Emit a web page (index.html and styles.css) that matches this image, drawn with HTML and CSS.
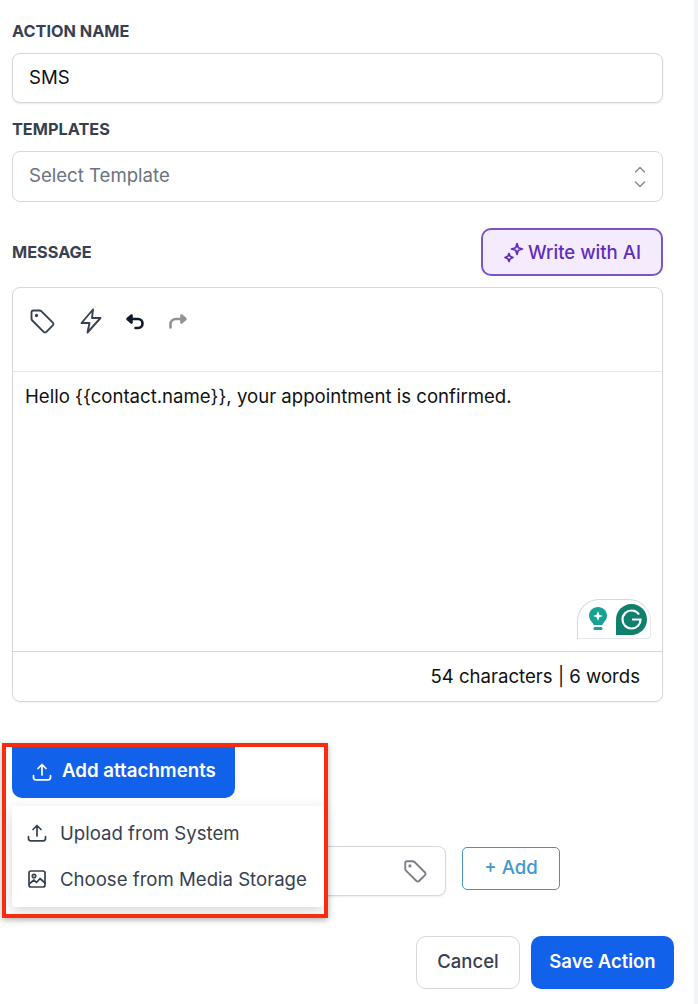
FILE: index.html
```html
<!DOCTYPE html>
<html>
<head>
    <meta charset="utf-8">
    <link rel="stylesheet" href="styles.css">
</head>

<body>

<div class="panel">
    <label class="field_label">ACTION NAME</label>
    <div class="input name_input">SMS</div>

    <label class="field_label templates_label">TEMPLATES</label>
    <div class="input select_input">
        <span>Select Template</span>
        <svg class="updown" width="14" height="26" viewBox="0 0 14 26" fill="none" stroke="#8b909a" stroke-width="1.6" stroke-linecap="round" stroke-linejoin="round">
            <path d="M2.500 8 7 3.500 11.500 8"/>
            <path d="M2.500 18 7 22.500 11.500 18"/>
        </svg>
    </div>

    <div class="message_head">
        <label class="field_label">MESSAGE</label>
        <div class="ai_button">
            <svg width="22" height="22" viewBox="0 0 22 22" fill="none" stroke="#5f2eb8" stroke-width="1.700" stroke-linejoin="round">
                <path d="M14 2.500 15.300 6.700 19.500 8 15.300 9.300 14 13.500 12.700 9.300 8.500 8 12.700 6.700Z"/>
                <path d="M6 12.500 7.200 15.300 10 16.500 7.200 17.700 6 20.500 4.800 17.700 2 16.500 4.800 15.300Z"/>
            </svg>
            Write with AI
        </div>
    </div>

    <div class="editor">
        <div class="toolbar">
            <svg width="28" height="28" viewBox="0 0 28 28" fill="none" stroke="#374151" stroke-width="1.900" stroke-linejoin="round">
                <path d="M3.500 5.500C3.500 4.400 4.400 3.500 5.500 3.500H11.500C12.300 3.500 13 3.800 13.500 4.300L24.800 15.600C25.600 16.400 25.600 17.600 24.800 18.400L18.400 24.800C17.600 25.600 16.400 25.600 15.600 24.800L4.300 13.500C3.800 13 3.500 12.300 3.500 11.500Z"/>
                <circle cx="8.500" cy="8.500" r="0.700" fill="#374151"/>
            </svg>
            <svg class="bolt" width="26" height="28" viewBox="0 0 26 28" fill="none" stroke="#374151" stroke-width="1.900" stroke-linejoin="round">
                <path d="M15 2.500 3.500 16H11.500L9.500 25.500 22.500 11H14Z"/>
            </svg>
            <svg class="undo" width="20" height="18" viewBox="0 0 20 18" fill="none" stroke="#111827" stroke-width="2.600" stroke-linecap="round" stroke-linejoin="round">
                <path d="M6.500 2.500 2.500 6 6.500 9.500Z" fill="#111827"/>
                <path d="M3.500 6H13C15.800 6 17.500 8 17.500 10.500S15.800 15 13 15H10.500"/>
            </svg>
            <svg class="redo" width="20" height="18" viewBox="0 0 20 18" fill="none" stroke="#8f9297" stroke-width="2.600" stroke-linecap="round" stroke-linejoin="round">
                <path d="M13.500 2.500 17.500 6 13.500 9.500Z" fill="#8f9297"/>
                <path d="M16.500 6H8C5 6 2.500 8 2.500 11V14.500"/>
            </svg>
        </div>
        <div class="editor_body">
            <p class="message_text">Hello {{contact.name}}, your appointment is confirmed.</p>
            <div class="grammarly">
                <svg width="20" height="26" viewBox="0 0 20 26">
                    <path d="M10 1C4.900 1 1 4.900 1 9.600 1 12.900 2.800 15 4.500 17 5.200 17.800 5.500 18.500 5.500 19H14.500C14.500 18.500 14.800 17.800 15.500 17 17.200 15 19 12.900 19 9.600 19 4.900 15.100 1 10 1Z" fill="#16a394"/>
                    <path d="M10 5 11.300 8.700 15 10 11.300 11.300 10 15 8.700 11.300 5 10 8.700 8.700Z" fill="#fff"/>
                    <rect x="5.500" y="21" width="9" height="3" rx="1.500" fill="#16a394"/>
                </svg>
                <svg width="31" height="31" viewBox="0 0 31 31" fill="none">
                    <path d="M15.500 0C24 0 31 7 31 15.500S24 31 15.500 31H0V15.500C0 7 7 0 15.500 0Z" fill="#0f7f6e"/>
                    <path d="M23 10.500C21.300 8 18.600 6.500 15.500 6.500 10.500 6.500 6.500 10.500 6.500 15.500S10.500 24.500 15.500 24.500C20.500 24.500 24.500 20.700 24.500 15.500H16" stroke="#fff" stroke-width="2.200"/>
                </svg>
            </div>
        </div>
        <div class="editor_foot">54 characters | 6 words</div>
    </div>

    <div class="attach_wrap">
        <div class="attach_button">
            <svg width="22" height="22" viewBox="0 0 22 22" fill="none" stroke="#fff" stroke-width="1.700" stroke-linecap="round" stroke-linejoin="round">
                <path d="M11 14V3.500M7 7.500 11 3.500 15 7.500"/>
                <path d="M2.500 14.500V16.500C2.500 17.800 3.500 18.800 4.800 18.800H17.200C18.500 18.800 19.500 17.800 19.500 16.500V14.500"/>
            </svg>
            <span>Add attachments</span>
        </div>
        <div class="attach_menu">
            <div class="menu_item">
                <svg width="22" height="22" viewBox="0 0 22 22" fill="none" stroke="#374151" stroke-width="1.700" stroke-linecap="round" stroke-linejoin="round">
                    <path d="M11 14V3.500M7 7.500 11 3.500 15 7.500"/>
                    <path d="M2.500 14.500V16.500C2.500 17.800 3.500 18.800 4.800 18.800H17.200C18.500 18.800 19.500 17.800 19.500 16.500V14.500"/>
                </svg>
                Upload from System
            </div>
            <div class="menu_item">
                <svg width="22" height="22" viewBox="0 0 22 22" fill="none" stroke="#374151" stroke-width="1.700" stroke-linecap="round" stroke-linejoin="round">
                    <rect x="3" y="3" width="16" height="16" rx="2"/>
                    <circle cx="8" cy="8" r="1.700"/>
                    <path d="M3 16 8 12 10.500 14.500 14 10.500 19 15"/>
                </svg>
                Choose from Media Storage
            </div>
        </div>
        <div class="red_box"></div>
    </div>

    <div class="tag_row">
        <div class="input tag_input">
            <svg width="26" height="26" viewBox="0 0 28 28" fill="none" stroke="#7b7f87" stroke-width="2" stroke-linejoin="round">
                <path d="M3.500 5.500C3.500 4.400 4.400 3.500 5.500 3.500H11.500C12.300 3.500 13 3.800 13.500 4.300L24.800 15.600C25.600 16.400 25.600 17.600 24.800 18.400L18.400 24.800C17.600 25.600 16.400 25.600 15.600 24.800L4.300 13.500C3.800 13 3.500 12.300 3.500 11.500Z"/>
                <circle cx="8.500" cy="8.500" r="0.700" fill="#7b7f87"/>
            </svg>
        </div>
        <div class="add_button">+ Add</div>
    </div>

    <div class="actions">
        <div class="cancel_button">Cancel</div>
        <div class="save_button">Save Action</div>
    </div>
</div>

</body>
</html>
```

FILE: styles.css
```css
html, body {
    margin: 0;
    padding: 0;
}
body {
    width: 698px;
    height: 1004px;
    overflow: hidden;
    background: #fff;
    font-family: Inter, "Noto Sans", sans-serif;
    color: #111;
}
.panel {
    width: 694px;
    height: 1004px;
    box-sizing: border-box;
    padding: 21px 0 0 12px;
    position: relative;
    box-shadow: 4px 0 0 #f3f4f6;
}
.field_label {
    display: block;
    font-size: 16.300px;
    line-height: 20px;
    font-weight: 700;
    color: #374151;
}
.templates_label {
    margin-top: 16px;
}
.input {
    box-sizing: border-box;
    width: 651px;
    border: 1px solid #d5d7db;
    border-radius: 8px;
    background: #fff;
    box-shadow: 0 1px 2px rgba(0, 0, 0, 0.08);
    display: flex;
    align-items: center;
    padding: 0 16px;
    font-size: 18.600px;
}
.name_input {
    height: 50px;
    margin-top: 12px;
    color: #111;
    padding-bottom: 3px;
}
.select_input {
    height: 51px;
    margin-top: 12px;
    color: #6b7280;
    justify-content: space-between;
    padding-bottom: 3px;
    box-shadow: none;
}
.updown {
    margin: 3px -1px 0 0;
}
.message_head {
    width: 651px;
    height: 48px;
    margin-top: 26px;
    display: flex;
    align-items: center;
    justify-content: space-between;
}
.ai_button {
    box-sizing: border-box;
    width: 182px;
    height: 48px;
    border: 2px solid #7a54c8;
    border-radius: 10px;
    background: #f4ebfd;
    color: #5f2eb8;
    font-size: 18.600px;
    font-weight: 500;
    display: flex;
    align-items: center;
    justify-content: center;
    gap: 3px;
}
.editor {
    box-sizing: border-box;
    width: 651px;
    height: 415px;
    margin-top: 11px;
    border: 1px solid #d5d7db;
    border-radius: 8px;
    display: flex;
    flex-direction: column;
    box-shadow: 0 1px 2px rgba(0, 0, 0, 0.05);
}
.toolbar {
    height: 84px;
    box-sizing: border-box;
    border-bottom: 1px solid #e5e7eb;
    padding: 19px 0 0 15px;
    display: flex;
    align-items: flex-start;
}
.bolt {
    margin-left: 22px;
}
.undo {
    margin: 6px 0 0 21px;
}
.redo {
    margin: 6px 0 0 23px;
}
.editor_body {
    flex: 1;
    position: relative;
}
.message_text {
    margin: 13px 0 0 12px;
    font-size: 18.600px;
    line-height: 22px;
    color: #111;
}
.grammarly {
    position: absolute;
    right: 11px;
    bottom: 12px;
    box-sizing: border-box;
    width: 74px;
    height: 40px;
    background: #fff;
    border: 1px solid #d5d7db;
    border-bottom-color: #e5e7eb;
    border-right-color: #e5e7eb;
    border-radius: 22px 22px 4px 0;
    display: flex;
    align-items: center;
    gap: 8px;
    padding-left: 10px;
}
.editor_foot {
    height: 50px;
    box-sizing: border-box;
    border-top: 1px solid #d5d7db;
    padding: 12px 22px 0 0;
    text-align: right;
    font-size: 18.600px;
    line-height: 24px;
    color: #111;
}
.attach_wrap {
    position: relative;
    margin-top: 43px;
    height: 53px;
}
.attach_button {
    box-sizing: border-box;
    width: 223px;
    height: 53px;
    background: #1261ea;
    border-radius: 0 0 10px 10px;
    color: #fff;
    font-size: 18.700px;
    font-weight: 600;
    display: flex;
    align-items: center;
    gap: 9px;
    padding-left: 19px;
}
.attach_button span {
    margin-bottom: 2px;
}
.attach_menu {
    position: absolute;
    left: 0;
    top: 61px;
    box-sizing: border-box;
    width: 312px;
    height: 101px;
    background: #fff;
    border-radius: 4px;
    box-shadow: 0 4px 14px rgba(0, 0, 0, 0.16);
    z-index: 2;
    padding-top: 4px;
}
.menu_item {
    height: 46px;
    display: flex;
    align-items: center;
    gap: 12px;
    padding-left: 14px;
    font-size: 18.600px;
    color: #374151;
}
.red_box {
    position: absolute;
    left: -10px;
    top: -2px;
    box-sizing: border-box;
    width: 326px;
    height: 175px;
    border: 4px solid #fa2c0f;
    box-shadow: 0 2px 6px rgba(0, 0, 0, 0.3);
    z-index: 3;
}
.tag_row {
    display: flex;
    align-items: flex-start;
    gap: 16px;
    margin-top: 48px;
}
.tag_input {
    width: 434px;
    height: 50px;
    justify-content: flex-end;
    padding-right: 17px;
}
.add_button {
    box-sizing: border-box;
    width: 98px;
    height: 43px;
    margin-top: 1px;
    padding-bottom: 3px;
    border: 1px solid #4d93b8;
    border-radius: 5px;
    color: #3f9ad0;
    font-size: 18.600px;
    font-weight: 500;
    display: flex;
    align-items: center;
    justify-content: center;
}
.actions {
    display: flex;
    justify-content: flex-end;
    gap: 11px;
    width: 662px;
    margin-top: 40px;
}
.cancel_button, .save_button {
    box-sizing: border-box;
    height: 53px;
    padding-bottom: 4px;
    border-radius: 10px;
    font-size: 18.500px;
    display: flex;
    align-items: center;
    justify-content: center;
}
.cancel_button {
    width: 104px;
    border: 1px solid #d5d7db;
    color: #374151;
    font-weight: 500;
}
.save_button {
    width: 143px;
    background: #1261ea;
    color: #fff;
    font-weight: 600;
}
```
